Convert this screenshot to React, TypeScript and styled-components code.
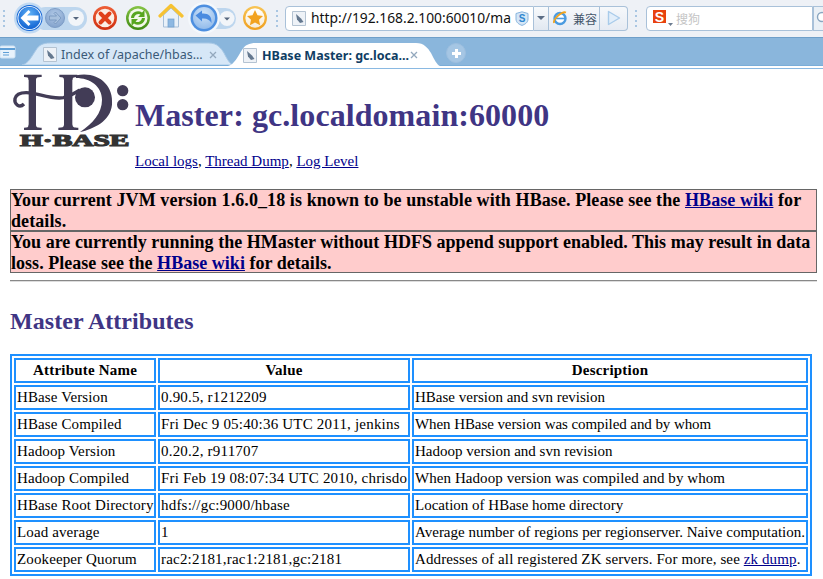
import React from "react";
import styled, { createGlobalStyle } from "styled-components";

const Global = createGlobalStyle`
  html, body { margin: 0; padding: 0; background: #fff; overflow: hidden; }
  #root { width: 823px; height: 579px; overflow: hidden; }
`;

const Page = styled.div`
  width: 823px;
  height: 579px;
  display: flex;
  flex-direction: column;
  overflow: hidden;
  font-family: "Liberation Serif", "Times New Roman", serif;
  color: #000;
`;

/* ---------- browser chrome ---------- */
const Toolbar = styled.div`
  height: 37px;
  flex: none;
  box-sizing: border-box;
  padding-bottom: 1px;
  background: #eef1f6;
  display: flex;
  align-items: center;
  white-space: nowrap;
`;
const Grip = styled.div<{ $ml: number; $mr: number }>`
  width: 2px;
  height: 18px;
  margin-top: 1px;
  margin-left: ${(p) => p.$ml}px;
  margin-right: ${(p) => p.$mr}px;
  background: repeating-linear-gradient(to bottom, #a9c6e2 0 2px, transparent 2px 5px);
`;
const Icon = styled.svg<{ $ml?: number }>`
  display: block;
  flex: none;
  margin-left: ${(p) => p.$ml ?? 0}px;
`;
const AddressBox = styled.div`
  width: 249px;
  height: 25px;
  box-sizing: border-box;
  background: #fff;
  border: 1px solid #a9c1d9;
  border-radius: 4px 0 0 4px;
  display: flex;
  align-items: center;
  padding-left: 6px;
`;
const AddressText = styled.span`
  font-family: "Noto Sans", sans-serif;
  font-size: 13.8px;
  line-height: 20px;
  color: #111;
  width: 201px;
  margin-left: 5px;
  overflow: hidden;
`;
const AddressDrop = styled.div`
  width: 15px;
  height: 25px;
  box-sizing: border-box;
  border: 1px solid #a9c1d9;
  border-left: none;
  background: linear-gradient(#f8fafc, #e1e8f1);
  display: flex;
  align-items: center;
  justify-content: center;
`;
const Caret = styled.div`
  width: 0;
  height: 0;
  border-left: 4px solid transparent;
  border-right: 4px solid transparent;
  border-top: 4px solid #5b6d85;
`;
const CompatBox = styled.div`
  width: 79px;
  height: 25px;
  box-sizing: border-box;
  border: 1px solid #a9c1d9;
  border-left: none;
  border-radius: 0 4px 4px 0;
  background: linear-gradient(#f6f8fb, #e6ebf3);
  display: flex;
  align-items: center;
  padding-left: 3px;
`;
const CompatText = styled.span`
  font-family: "Noto Sans CJK SC", sans-serif;
  font-size: 12px;
  color: #45566b;
  margin-left: 5px;
  width: 26px;
`;
const CompatPlay = styled.div`
  height: 23px;
  border-left: 1px solid #a9c1d9;
  padding-left: 7px;
  display: flex;
  align-items: center;
`;
const SearchBox = styled.div`
  width: 167px;
  height: 25px;
  box-sizing: border-box;
  background: #fff;
  border: 1px solid #a9c1d9;
  border-radius: 4px 0 0 4px;
  display: flex;
  align-items: center;
  padding-left: 6px;
`;
const SearchText = styled.span`
  font-family: "Noto Sans CJK SC", sans-serif;
  font-size: 12px;
  color: #c4c4c4;
  margin-left: 3px;
`;
const SearchEnd = styled.div`
  width: 10px;
  height: 25px;
  box-sizing: border-box;
  background: #eaf0f6;
  border-top: 1px solid #a9c1d9;
  border-bottom: 1px solid #a9c1d9;
  border-left: 1px solid #a9c1d9;
  overflow: hidden;
  display: flex;
  align-items: center;
`;

const TabStrip = styled.div`
  height: 29px;
  flex: none;
  box-sizing: border-box;
  background: #8ab6dc;
  border-top: 1px solid #6f9fc9;
  border-bottom: 1px solid #7aadd8;
  display: flex;
  align-items: flex-end;
  white-space: nowrap;
`;
const StripBase = styled.div`
  height: 3px;
  flex: none;
  box-sizing: border-box;
  background: #fff;
  border-bottom: 1px solid #8ab9e2;
`;
const SideButton = styled.div`
  width: 22px;
  height: 27px;
  flex: none;
  display: flex;
  align-items: center;
`;
const Tab = styled.div<{ $active?: boolean; $w: number; $ml: number }>`
  position: relative;
  width: ${(p) => p.$w}px;
  height: ${(p) => (p.$active ? 24 : 23)}px;
  flex: none;
  margin-left: ${(p) => p.$ml}px;
  margin-bottom: ${(p) => (p.$active ? -1 : 0)}px;
  display: flex;
  align-items: center;
  font-family: "Noto Sans", sans-serif;
  font-size: 12.5px;
  font-weight: ${(p) => (p.$active ? 700 : 400)};
  color: ${(p) => (p.$active ? "#0f3d63" : "#3a5a78")};
`;
const TabShape = styled.svg`
  position: absolute;
  inset: 0;
`;
const TabContent = styled.div<{ $pl: number }>`
  position: relative;
  display: flex;
  align-items: center;
  padding: 2px 0 0 ${(p) => p.$pl}px;
`;
const TabLabel = styled.span<{ $w: number; $ml: number }>`
  display: inline-block;
  width: ${(p) => p.$w}px;
  margin-left: ${(p) => p.$ml}px;
`;
const NewTab = styled.div`
  width: 20px;
  height: 20px;
  margin: 0 0 2px 6px;
  border-radius: 50%;
  background: #a5c6e4;
  border: 1px solid #9dbfdf;
  box-sizing: border-box;
  display: flex;
  align-items: center;
  justify-content: center;
`;

/* ---------- page content ---------- */
const Content = styled.div`
  flex: 1;
  padding: 0 6px 0 10px;
  overflow: hidden;
`;
const Header = styled.div`
  display: flex;
  align-items: flex-start;
  height: 120px;
`;
const HeaderText = styled.div`
  margin-left: 1px;
`;
const Title = styled.h1`
  margin: 28px 0 0;
  font-size: 32px;
  line-height: 37px;
  font-weight: 700;
  letter-spacing: 0.07px;
  color: #3f3584;
`;
const Links = styled.div`
  margin-top: 19px;
  font-size: 15px;
  line-height: 17px;
`;
const PageLink = styled.a`
  color: #00008b;
  text-decoration: underline;
`;
const Warning = styled.div<{ $ls: number }>`
  box-sizing: border-box;
  height: 42px;
  width: 807px;
  background: #ffcccc;
  border: 1px solid #666;
  font-size: 18px;
  font-weight: 700;
  letter-spacing: ${(p) => p.$ls}px;
  line-height: 21px;
`;
const Rule = styled.hr`
  height: 0;
  border: none;
  border-top: 1px solid #888;
  border-bottom: 1px solid #ddd;
  margin: 7px 0 0;
  width: 807px;
`;
const SectionTitle = styled.h2`
  margin: 25px 0 0;
  font-size: 24px;
  line-height: 28px;
  font-weight: 700;
  letter-spacing: 0.05px;
  color: #3f3584;
`;
const AttrTable = styled.table`
  margin: 19px 0 0 0;
  width: 802px;
  box-sizing: border-box;
  border: 2px solid #1e90ff;
  border-collapse: separate;
  border-spacing: 2px;
  table-layout: fixed;
  font-size: 15px;
`;
const Th = styled.th`
  border: 2px solid #1e90ff;
  height: 21px;
  padding: 0 2px;
  box-sizing: content-box;
  font-weight: 700;
  letter-spacing: 0.2px;
  text-align: center;
  line-height: 17px;
`;
const Td = styled.td<{ $ls?: number }>`
  border: 2px solid #1e90ff;
  height: 21px;
  padding: 0 1px;
  line-height: 17px;
  letter-spacing: ${(p) => p.$ls ?? 0}px;
  white-space: nowrap;
  overflow: hidden;
`;

/* ---------- icons ---------- */
const Defs = () => (
  <svg width="0" height="0" style={{ position: "absolute" }}>
    <defs>
      <radialGradient id="gBlue" cx="50%" cy="30%" r="75%">
        <stop offset="0" stopColor="#5fb0f5" />
        <stop offset="1" stopColor="#0e5fd0" />
      </radialGradient>
      <radialGradient id="gUndo" cx="50%" cy="30%" r="75%">
        <stop offset="0" stopColor="#cfe3f8" />
        <stop offset="1" stopColor="#8fb9ea" />
      </radialGradient>
      <radialGradient id="gGrey" cx="50%" cy="35%" r="70%">
        <stop offset="0" stopColor="#b3cbe8" />
        <stop offset="1" stopColor="#7f9fca" />
      </radialGradient>
      <linearGradient id="gRedRing" x1="0" y1="0" x2="0" y2="1">
        <stop offset="0" stopColor="#ee5f38" />
        <stop offset="1" stopColor="#cf2f10" />
      </linearGradient>
      <linearGradient id="gGreenRing" x1="0" y1="0" x2="0" y2="1">
        <stop offset="0" stopColor="#86c446" />
        <stop offset="1" stopColor="#3f8a12" />
      </linearGradient>
      <linearGradient id="gOrangeRing" x1="0" y1="0" x2="0" y2="1">
        <stop offset="0" stopColor="#f8c556" />
        <stop offset="1" stopColor="#ef9f1e" />
      </linearGradient>
      <linearGradient id="gInner" x1="0" y1="0" x2="0" y2="1">
        <stop offset="0" stopColor="#ffffff" />
        <stop offset="1" stopColor="#f6ecd8" />
      </linearGradient>
    </defs>
  </svg>
);

const NavGroup = () => (
  <Icon $ml={9} width="73" height="36" viewBox="0 0 73 36">
    <rect x="20" y="7" width="53" height="23" rx="11.5" fill="#bdd6ee" />
    <circle cx="15.5" cy="18" r="15.5" fill="#c0d9f2" />
    <circle cx="15.5" cy="18" r="13" fill="#1566d6" />
    <circle cx="15.5" cy="18" r="11.5" fill="none" stroke="#e4f0fc" strokeWidth="1.2" />
    <circle cx="15.5" cy="18" r="10.8" fill="url(#gBlue)" />
    <path d="M6.5 18 L14.5 10 L16.5 12 L13 15.5 H24.5 V20.5 H13 L16.5 24 L14.5 26 Z" fill="#fff" />
    <circle cx="41" cy="18" r="9.5" fill="url(#gGrey)" stroke="#7d9dc7" />
    <path d="M47 18 L41.5 12 L40 13.5 L42.5 16 H35.5 V20 H42.5 L40 22.5 L41.5 24 Z" fill="#a8c1de" stroke="#6a8cb8" strokeWidth="0.7" />
    <circle cx="62" cy="18" r="8" fill="#f2f5f9" />
    <path d="M59 17 h6 l-3 3 z" fill="#55667e" />
  </Icon>
);
const StopIcon = () => (
  <Icon $ml={5} width="26" height="36" viewBox="0 0 26 36">
    <circle cx="13" cy="18" r="12" fill="url(#gRedRing)" />
    <circle cx="13" cy="18" r="9.3" fill="#fbeee6" />
    <path d="M8.5 13.5 L17.5 22.5 M17.5 13.5 L8.5 22.5" stroke="#e0411b" strokeWidth="4" strokeLinecap="round" />
  </Icon>
);
const RefreshIcon = () => (
  <Icon $ml={7} width="26" height="36" viewBox="0 0 26 36">
    <circle cx="13" cy="18" r="12" fill="url(#gGreenRing)" />
    <circle cx="13" cy="18" r="9.5" fill="#f2f8e8" />
    <path d="M6 18 A7 7 0 0 1 17 12.5 L19.5 10 V17 H13 L15.5 14.5 A4.5 4.5 0 0 0 9 18 Z" fill="#57a61f" />
    <path d="M20 18 A7 7 0 0 1 9 23.5 L6.5 26 V19 H13 L10.5 21.5 A4.5 4.5 0 0 0 17 18 Z" fill="#57a61f" />
  </Icon>
);
const HomeIcon = () => (
  <Icon $ml={7} width="26" height="36" viewBox="0 0 26 36">
    <path d="M5.5 15 V27 H20.5 V15 L13 8 Z" fill="#e9f1f9" stroke="#a6bfd8" />
    <rect x="10" y="19" width="6" height="8" fill="#8db8e2" stroke="#6f9ecb" strokeWidth="0.7" />
    <path d="M2 16 L13 5.5 L24 16" fill="none" stroke="#f6c232" strokeWidth="3.2" strokeLinejoin="round" strokeLinecap="round" />
  </Icon>
);
const UndoGroup = () => (
  <Icon $ml={4} width="50" height="36" viewBox="0 0 50 36">
    <rect x="18" y="8" width="30" height="21" rx="10.5" fill="#bdd6ee" />
    <circle cx="16" cy="18" r="16" fill="#f4f8fc" />
    <circle cx="16" cy="18" r="13.5" fill="#4d8fe0" />
    <circle cx="16" cy="18" r="11" fill="url(#gUndo)" />
    <path d="M7.5 15.5 L14 10.5 V13.5 C20 13 24 15.5 23.5 23 C21.5 19.5 18.5 18 14 18.5 V21.5 Z" fill="#4a8be0" />
    <circle cx="39" cy="18.5" r="7.5" fill="#f2f5f9" />
    <path d="M36 17.5 h6 l-3 3 z" fill="#55667e" />
  </Icon>
);
const StarIcon = () => (
  <Icon $ml={4} width="26" height="36" viewBox="0 0 26 36">
    <circle cx="13" cy="18" r="12" fill="url(#gOrangeRing)" />
    <circle cx="13" cy="18" r="9.7" fill="url(#gInner)" />
    <path d="M13 10 L15.5 15.3 L21 16 L17 19.8 L18.1 25.3 L13 22.5 L7.9 25.3 L9 19.8 L5 16 L10.5 15.3 Z" fill="#f2a21f" />
  </Icon>
);
const PageIcon = () => (
  <Icon width="14" height="15" viewBox="0 0 14 15">
    <path d="M.5 .5 H13.5 V14.5 H.5 Z" fill="#eef2f7" stroke="#b4c3d2" />
    <path d="M4 3 L9 7.5 L11.5 11 L8 12 L5 8.5 Z" fill="#64788f" />
  </Icon>
);
const ShieldIcon = () => (
  <Icon $ml={3} width="14" height="15" viewBox="0 0 14 15">
    <path d="M7 .8 L13 2.5 V8 C13 11.5 10 13.4 7 14.4 C4 13.4 1 11.5 1 8 V2.5 Z" fill="#d5e6f6" stroke="#86b4de" />
    <text x="7" y="11" textAnchor="middle" fontFamily="Liberation Sans" fontWeight="700" fontSize="10" fill="#2f86cf">S</text>
  </Icon>
);
const IeIcon = () => (
  <Icon width="16" height="16" viewBox="0 0 16 16">
    <circle cx="8" cy="8.5" r="5.5" fill="#fff" stroke="#4b9be0" strokeWidth="2.4" />
    <path d="M3 8.5 H13" stroke="#4b9be0" strokeWidth="1.6" />
    <path d="M2 13 C1 9 10 1 14 2.5" fill="none" stroke="#f1a31c" strokeWidth="1.8" />
  </Icon>
);
const PlayIcon = () => (
  <Icon width="14" height="16" viewBox="0 0 14 16">
    <path d="M1.5 1.5 L12.5 8 L1.5 14.5 Z" fill="#e2eefa" stroke="#a9cbea" strokeWidth="1.4" strokeLinejoin="round" />
  </Icon>
);
const SogouIcon = () => (
  <Icon width="20" height="18" viewBox="0 0 20 18">
    <rect x="0" y="1" width="13" height="13" fill="#e8420f" />
    <text x="6.5" y="12.5" textAnchor="middle" fontFamily="Liberation Sans" fontWeight="700" fontSize="14" fill="#fff">S</text>
    <path d="M15 14 h5 l-2.5 3 z" fill="#6c7c90" />
  </Icon>
);
const LensIcon = () => (
  <Icon $ml={2} width="12" height="14" viewBox="0 0 12 14">
    <circle cx="6" cy="6" r="4.5" fill="#fff" stroke="#8aa6c0" strokeWidth="1.4" />
  </Icon>
);
const SideIcon = () => (
  <Icon width="16" height="14" viewBox="0 0 16 14">
    <rect x="0" y="1" width="15" height="12" rx="1.5" fill="#e8f2fb" stroke="#cfe2f3" />
    <rect x="0" y="3" width="15" height="2" fill="#5f9fd6" />
    <path d="M3 7.5 H9 M3 10 H9" stroke="#5f9fd6" strokeWidth="1" />
  </Icon>
);
const CloseIcon = () => (
  <Icon width="8" height="8" viewBox="0 0 8 8">
    <path d="M1 1 L7 7 M7 1 L1 7" stroke="#93a8bd" strokeWidth="1.3" />
  </Icon>
);
const TabBg = ({ w, h, active }: { w: number; h: number; active?: boolean }) => (
  <TabShape width={w} height={h} viewBox={`0 0 ${w} ${h}`}>
    <path
      d={`M0 ${h} C6 ${h - 1} 10 14 14 8 C17 3 21 1 28 1 H${w - 24} C${w - 16} 1 ${w - 12} 6 ${w - 9} 11 C${w - 6} 17 ${w - 3} ${h - 1} ${w} ${h} Z`}
      fill={active ? "#ffffff" : "#d6e7f7"}
      stroke={active ? "none" : "#a7c8e6"}
    />
  </TabShape>
);
const Logo = () => (
  <Icon width="124" height="80" viewBox="30 3 372 240">
    <g fill="#423c56">
      <rect x="86" y="22" width="22" height="162" />
      <rect x="192" y="22" width="25" height="162" />
      <path d="M72 20 H125 V27 C112 27 108 29 108 36 H86 C86 29 82 27 72 27 Z" />
      <path d="M72 186 H125 V179 C112 179 108 177 108 170 H86 C86 177 82 179 72 179 Z" />
      <path d="M178 20 H232 V27 C222 27 217 29 217 36 H192 C192 29 188 27 178 27 Z" />
      <path d="M175 186 H235 V179 C224 179 217 177 217 170 H192 C192 177 186 179 175 179 Z" />
      <path d="M228 22 C290 8 342 48 336 110 C331 160 282 182 240 192 C278 166 306 136 306 95 C306 55 270 30 228 30 Z" />
      <circle cx="255" cy="88" r="30" />
      <circle cx="368" cy="68" r="17" />
      <circle cx="368" cy="110" r="17" />
    </g>
    <path
      d="M72 108 C58 122 42 108 45 92 C50 72 75 72 100 76 C130 82 160 94 190 89 C210 85 225 74 240 66"
      fill="none"
      stroke="#423c56"
      strokeWidth="10"
    />
    <text
      x="60"
      y="235"
      fontFamily="Liberation Serif"
      fontWeight="700"
      fontSize="52"
      textLength="328"
      lengthAdjust="spacingAndGlyphs"
      fill="#333"
      stroke="#333"
      strokeWidth="3.5"
    >
      H·BASE
    </text>
  </Icon>
);

const rows: [string, string, React.ReactNode, number][] = [
  ["HBase Version", "0.90.5, r1212209", "HBase version and svn revision", 0],
  ["HBase Compiled", "Fri Dec 9 05:40:36 UTC 2011, jenkins", "When HBase version was compiled and by whom", -0.08],
  ["Hadoop Version", "0.20.2, r911707", "Hadoop version and svn revision", 0],
  ["Hadoop Compiled", "Fri Feb 19 08:07:34 UTC 2010, chrisdo", "When Hadoop version was compiled and by whom", 0.07],
  ["HBase Root Directory", "hdfs://gc:9000/hbase", "Location of HBase home directory", 0],
  ["Load average", "1", "Average number of regions per regionserver. Naive computation.", 0],
  [
    "Zookeeper Quorum",
    "rac2:2181,rac1:2181,gc:2181",
    <>
      Addresses of all registered ZK servers. For more, see <PageLink href="#">zk dump</PageLink>.
    </>,
    0.11,
  ],
];

export default function App() {
  return (
    <Page>
      <Global />
      <Defs />
      <Toolbar>
        <Grip $ml={3} $mr={0} />
        <NavGroup />
        <StopIcon />
        <RefreshIcon />
        <HomeIcon />
        <UndoGroup />
        <StarIcon />
        <Grip $ml={8} $mr={7} />
        <AddressBox>
          <PageIcon />
          <AddressText>http://192.168.2.100:60010/ma</AddressText>
          <ShieldIcon />
        </AddressBox>
        <AddressDrop>
          <Caret />
        </AddressDrop>
        <CompatBox>
          <IeIcon />
          <CompatText>兼容</CompatText>
          <CompatPlay>
            <PlayIcon />
          </CompatPlay>
        </CompatBox>
        <Grip $ml={7} $mr={9} />
        <SearchBox>
          <SogouIcon />
          <SearchText>搜狗</SearchText>
        </SearchBox>
        <SearchEnd>
          <LensIcon />
        </SearchEnd>
      </Toolbar>
      <TabStrip>
        <SideButton>
          <SideIcon />
        </SideButton>
        <Tab $w={211} $ml={0}>
          <TabBg w={211} h={23} />
          <TabContent $pl={21}>
            <PageIcon />
            <TabLabel $w={148} $ml={4}>Index of /apache/hbas...</TabLabel>
            <CloseIcon />
          </TabContent>
        </Tab>
        <Tab $active $w={212} $ml={-5}>
          <TabBg w={212} h={24} active />
          <TabContent $pl={15}>
            <PageIcon />
            <TabLabel $w={148} $ml={5}>HBase Master: gc.loca...</TabLabel>
            <CloseIcon />
          </TabContent>
        </Tab>
        <NewTab>
          <Icon width="11" height="11" viewBox="0 0 11 11">
            <path d="M5.5 1 V10 M1 5.5 H10" stroke="#fff" strokeWidth="3" />
          </Icon>
        </NewTab>
      </TabStrip>
      <StripBase />
      <Content>
        <Header>
          <Logo />
          <HeaderText>
            <Title>Master: gc.localdomain:60000</Title>
            <Links>
              <PageLink href="#">Local logs</PageLink>, <PageLink href="#">Thread Dump</PageLink>,{" "}
              <PageLink href="#">Log Level</PageLink>
            </Links>
          </HeaderText>
        </Header>
        <Warning $ls={0.09}>
          Your current JVM version 1.6.0_18 is known to be unstable with HBase. Please see the{" "}
          <PageLink href="#">HBase wiki</PageLink> for details.
        </Warning>
        <Warning $ls={0.03}>
          You are currently running the HMaster without HDFS append support enabled. This may result in data loss.
          Please see the <PageLink href="#">HBase wiki</PageLink> for details.
        </Warning>
        <Rule />
        <SectionTitle>Master Attributes</SectionTitle>
        <AttrTable>
          <colgroup>
            <col style={{ width: 142 }} />
            <col style={{ width: 252 }} />
            <col />
          </colgroup>
          <thead>
            <tr>
              <Th>Attribute Name</Th>
              <Th>Value</Th>
              <Th>Description</Th>
            </tr>
          </thead>
          <tbody>
            {rows.map(([a, b, c, ls]) => (
              <tr key={a}>
                <Td $ls={0.12}>{a}</Td>
                <Td $ls={0.2}>{b}</Td>
                <Td $ls={ls}>{c}</Td>
              </tr>
            ))}
          </tbody>
        </AttrTable>
      </Content>
    </Page>
  );
}
